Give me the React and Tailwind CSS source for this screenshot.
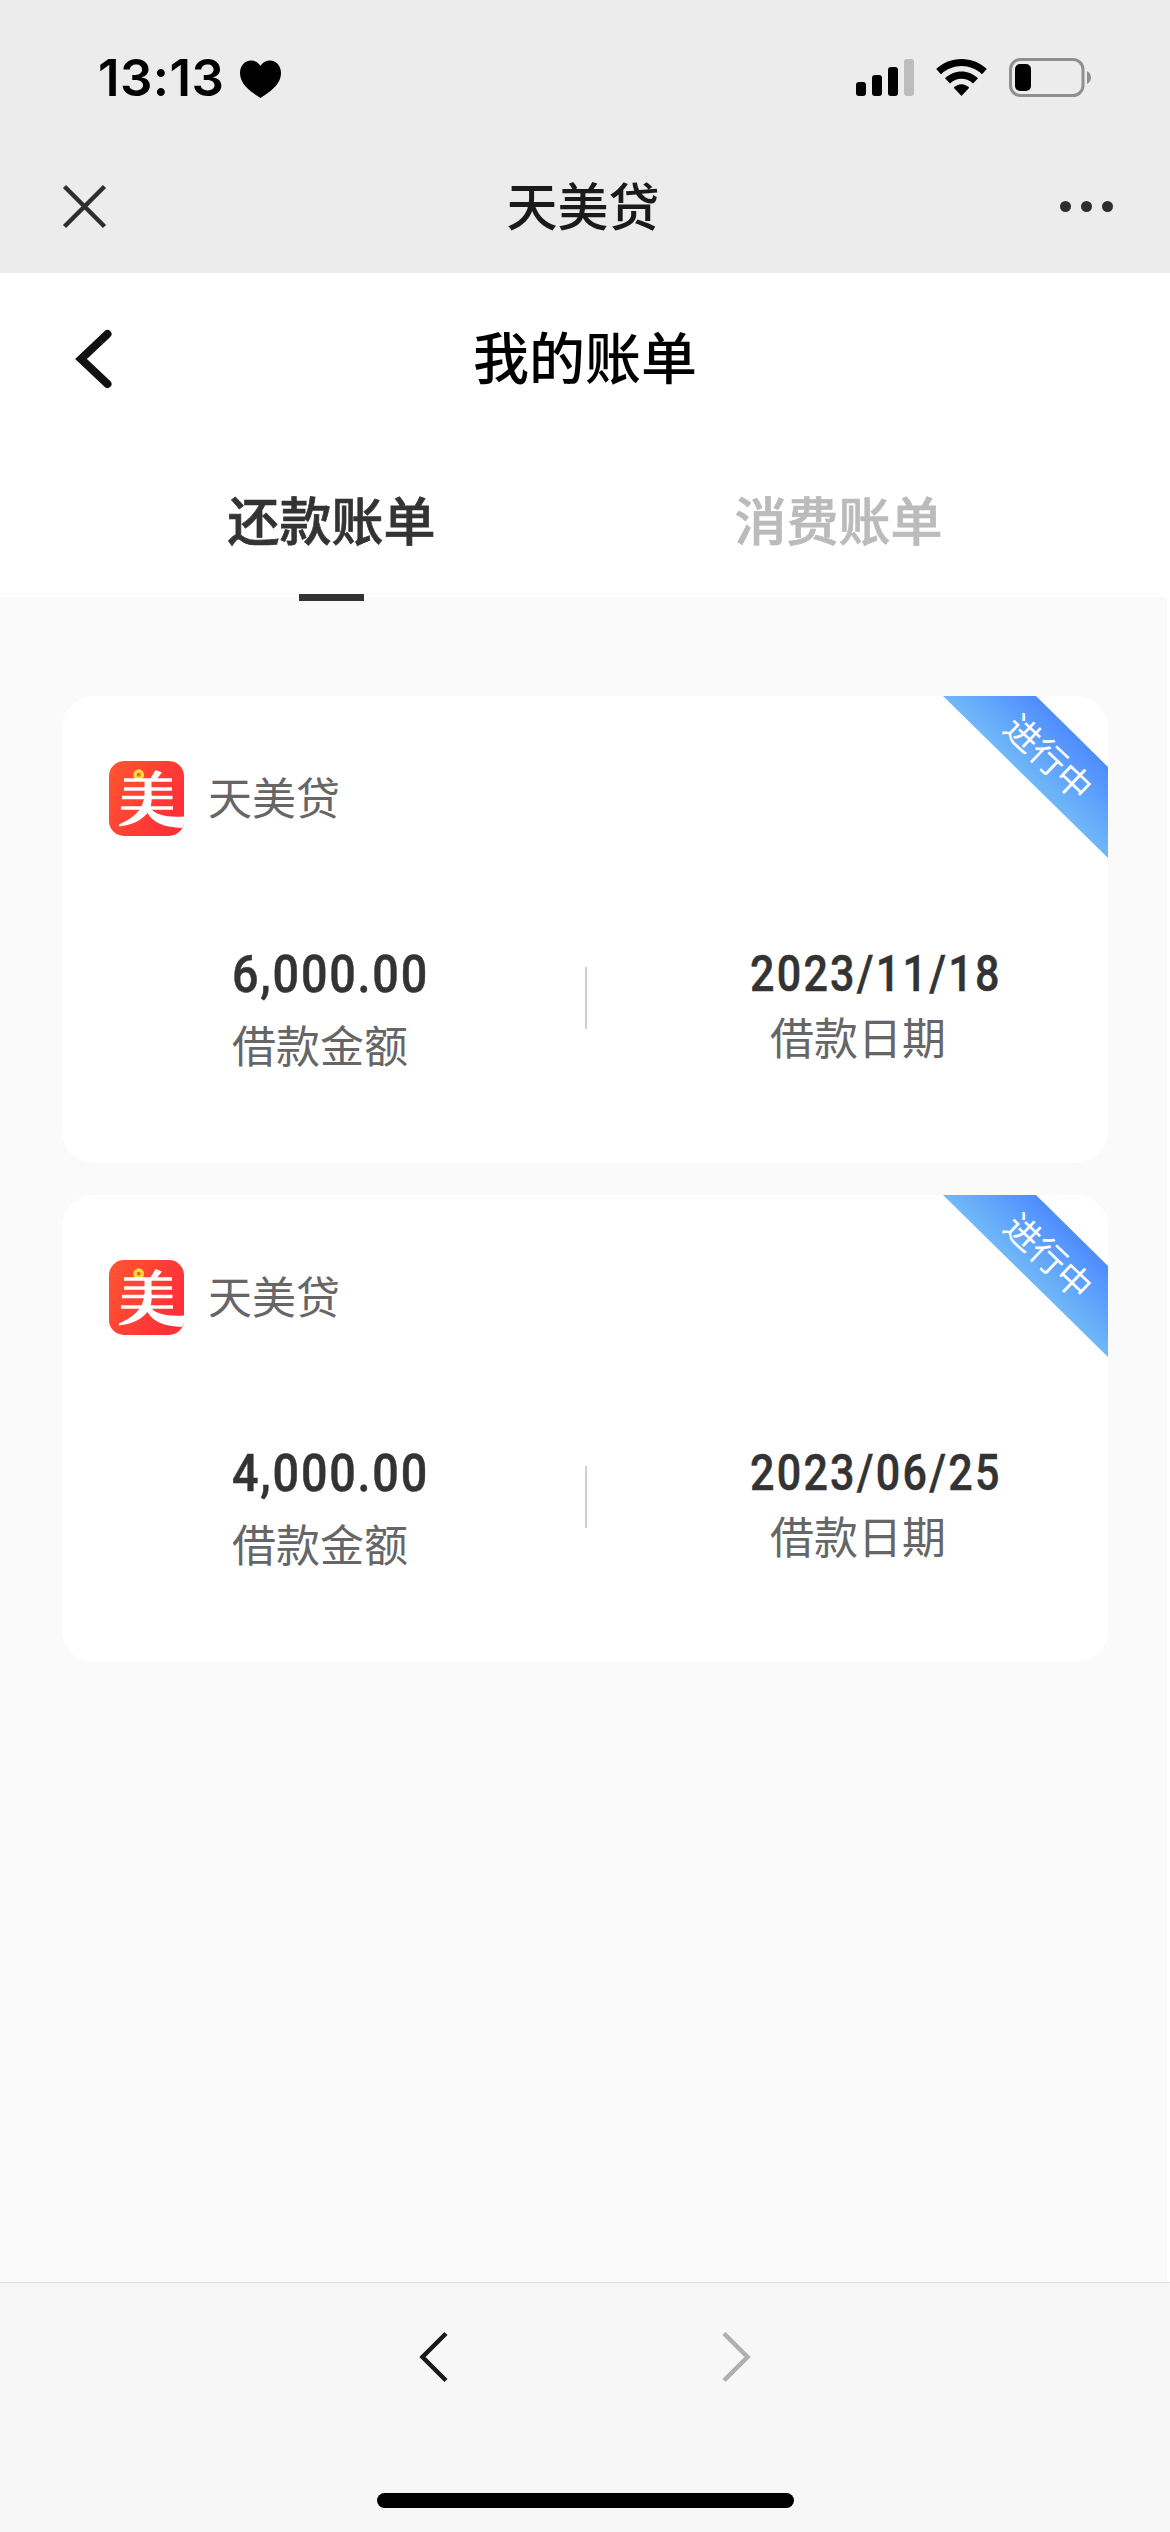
import React from "react";

const bills = [
  { amount: "6,000.00", date: "2023/11/18" },
  { amount: "4,000.00", date: "2023/06/25" },
];

function StatusBar() {
  return (
    <div className="flex h-[140px] items-start justify-between pl-[98px] pr-[78px] pt-[48px]">
      <div className="flex h-[60px] items-center">
        <span className="font-['Inter',sans-serif] text-[51px] font-semibold leading-[60px] tracking-[0.400px] text-black">13:13</span>
        <svg className="ml-[16px] mt-[2px]" width="41" height="38" viewBox="0 0 41 38">
          <path d="M20.5 38C13 33 0 25.500 0 13C0 5.500 5 .5 11 .5C15.500 .5 19 3 20.500 6C22 3 25.500 .5 30 .5C36 .5 41 5.500 41 13C41 25.500 28 33 20.500 38Z" />
        </svg>
      </div>
      <svg className="mt-[8px]" width="236" height="46" viewBox="856 56 236 46">
        <rect x="856" y="82" width="10" height="14" rx="3" />
        <rect x="872" y="75" width="10" height="21" rx="3" />
        <rect x="888" y="67" width="10" height="29" rx="3" />
        <rect x="904" y="59" width="10" height="37" rx="3" fill="#bdbdbd" />
        <path d="M961.500 59C971 59 980 62.500 986.800 69L982 74.200C976.500 69 969 66 961.500 66S946.500 69 941 74.200L936.200 69C943 62.500 952 59 961.500 59Z" />
        <path d="M961.500 71.500C967.500 71.500 973.500 74 978 78.300L973 83.400C970 80.500 966 78.800 961.500 78.800S953 80.500 950 83.400L945 78.300C949.500 74 955.500 71.500 961.500 71.500Z" />
        <path d="M961.500 84.300C964.500 84.300 967 85.500 969.200 87.800L961.500 96L953.800 87.800C956 85.500 958.500 84.300 961.500 84.300Z" />
        <rect x="1010.500" y="59.500" width="72.500" height="36" rx="10" fill="none" stroke="#8f8f8f" strokeWidth="3" />
        <rect x="1015" y="64" width="16" height="27" rx="5" />
        <path d="M1087 71C1092.300 73.500 1092.300 81.500 1087 84Z" fill="#8f8f8f" />
      </svg>
    </div>
  );
}

function TitleBar() {
  return (
    <div className="grid h-[133px] grid-cols-[1fr_auto_1fr] items-center px-[62px]">
      <svg width="45" height="45" viewBox="0 0 45 45">
        <path d="M2.500 2.500L42.500 42.500M42.500 2.500L2.500 42.500" stroke="#2e2e2e" strokeWidth="4.500" />
      </svg>
      <div className="pb-[6px] pr-[4px] text-[51px] font-medium leading-[60px] text-[#1a1a1a]">天美贷</div>
      <div className="mr-[-5px] flex gap-[10px] justify-self-end">
        <i className="size-[11px] rounded-full bg-[#2e2e2e]" />
        <i className="size-[11px] rounded-full bg-[#2e2e2e]" />
        <i className="size-[11px] rounded-full bg-[#2e2e2e]" />
      </div>
    </div>
  );
}

function BrandLogo() {
  return (
    <svg width="75" height="75" viewBox="0 0 75 75">
      <defs>
        <linearGradient id="brand" x1="0" y1="0" x2="1" y2="0.500">
          <stop offset="0" stopColor="#ff5630" />
          <stop offset="1" stopColor="#ff3038" />
        </linearGradient>
      </defs>
      <rect width="75" height="75" rx="15" fill="url(#brand)" />
      <circle cx="29.700" cy="13.700" r="5.400" fill="#ffdc3c" />
      <circle cx="29.700" cy="13.700" r="2" fill="#f0662a" />
      <g stroke="#fff" strokeWidth="3.600" fill="none">
        <path d="M15 19H63M15 28H63M13 36.500H63.500M12 47H64" />
        <path d="M39 19V35" strokeWidth="7" />
      </g>
      <path d="M46.500 9L53 11.500L46 20H40Z" fill="#fff" />
      <path d="M35.500 34H43C42.500 40 42.500 44 41 47C47 54 57 56.500 75 55.500V63L73 67C56 66.500 44 62 38.500 52C32 60 22 64 10 65.500V63.500C24 57 34 50 35.500 34Z" fill="#fff" />
    </svg>
  );
}

function Ribbon() {
  return (
    <div className="absolute right-0 top-0 h-[162px] w-[165px]">
      <div className="h-full w-full bg-[linear-gradient(225deg,#4e8cff_22%,#70b8f8_50%)] [clip-path:polygon(0_0,93px_0,165px_71px,165px_162px)]" />
      <div className="absolute left-[53px] top-[40px] w-[108px] rotate-[43.500deg] text-center text-[35px] leading-[40px] text-white">进行中</div>
    </div>
  );
}

function BillCard({ bill }) {
  return (
    <div className="relative h-[467px] rounded-[32px] bg-white pl-[47px] pt-[65px]">
      <Ribbon />
      <div className="flex h-[75px] items-center gap-[24px]">
        <BrandLogo />
        <span className="pb-[6px] text-[44px] leading-[60px] text-[#666]">天美贷</span>
      </div>
      <div className="flex pt-[108px]">
        <div className="ml-[123px] w-[353px]">
          <div className="h-[60px] origin-left scale-x-[0.890] whitespace-nowrap font-['Roboto',sans-serif] text-[52.500px] font-medium leading-[60px] tracking-[2px] text-[#333] [-webkit-text-stroke:0.500px_#333]">{bill.amount}</div>
          <div className="mt-[10px] text-[44px] leading-[60px] text-[#666]">借款金额</div>
        </div>
        <div className="mt-[23px] h-[62px] w-[2px] bg-[#cfcfcf]" />
        <div className="ml-[136px] w-[270px]">
          <div className="ml-[27px] h-[60px] w-[300px] origin-left scale-x-[0.853] whitespace-nowrap font-['Roboto',sans-serif] text-[50.500px] font-medium leading-[60px] tracking-[2.600px] text-[#333] [-webkit-text-stroke:0.500px_#333]">{bill.date}</div>
          <div className="mt-[2px] text-center text-[44px] leading-[60px] text-[#666]">借款日期</div>
        </div>
      </div>
    </div>
  );
}

export default function App() {
  return (
    <div className="flex h-[2532px] w-[1170px] flex-col overflow-hidden bg-[#fafafa] font-['Noto_Sans_CJK_SC',sans-serif]">
      <div className="h-[273px] bg-[#ececec]">
        <StatusBar />
        <TitleBar />
      </div>
      <div className="h-[324px] bg-white">
        <div className="grid h-[171px] grid-cols-[1fr_auto_1fr] items-center px-[75px]">
          <svg width="38" height="62" viewBox="0 0 38 62">
            <path d="M32.500 6L6 31L32.500 56" fill="none" stroke="#111" strokeWidth="8" strokeLinecap="round" strokeLinejoin="miter" />
          </svg>
          <div className="pb-[7px] text-[56px] font-medium leading-[70px] text-black">我的账单</div>
        </div>
        <div className="grid h-[157px] grid-cols-2 px-[78px] text-center text-[52px] font-medium leading-[60px]">
          <div className="flex flex-col items-center justify-between pt-[45px]">
            <span className="text-[#333] [-webkit-text-stroke:0.700px_#333]">还款账单</span>
            <div className="h-[7px] w-[65px] bg-[#333]" />
          </div>
          <div className="pt-[45px] text-[#bbb] [-webkit-text-stroke:0.700px_#bbb]">消费账单</div>
        </div>
      </div>
      <div className="flex flex-1 flex-col gap-[32px] border-r-[3px] border-white pl-[62px] pr-[59px] pt-[99px]">
        {bills.map((b) => (
          <BillCard key={b.date} bill={b} />
        ))}
      </div>
      <div className="flex h-[250px] flex-col items-center justify-between border-t border-[#dedede] bg-[#f7f7f7] pb-[24px] pt-[47px]">
        <div className="flex gap-[272px]">
          <svg width="30" height="54" viewBox="0 0 30 54">
            <path d="M27 3.500L3.500 27L27 50.500" fill="none" stroke="#1a1a1a" strokeWidth="4.500" />
          </svg>
          <svg width="30" height="54" viewBox="0 0 30 54">
            <path d="M3 3.500L26.500 27L3 50.500" fill="none" stroke="#b0b0b0" strokeWidth="4.500" />
          </svg>
        </div>
        <div className="h-[15px] w-[417px] rounded-full bg-black" />
      </div>
    </div>
  );
}
